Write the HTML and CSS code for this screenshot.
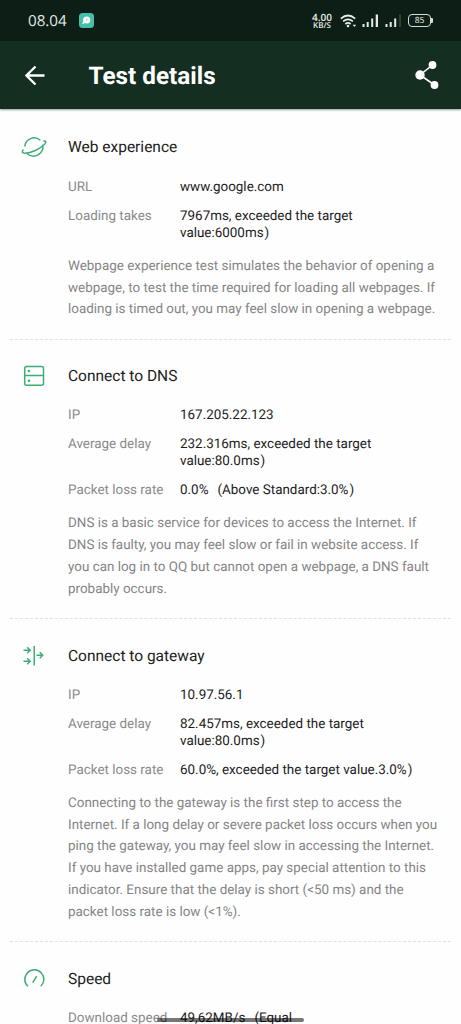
FILE: index.html
```html
<!DOCTYPE html>
<html lang="en">
<head>
<meta charset="utf-8">
<title>Test details</title>
<link rel="stylesheet" href="styles.css">
</head>
<body>
<div class="screen">
  <div class="status">
    <span class="clock">08.04</span>
    <svg class="app" width="15" height="15" viewBox="0 0 15 15"><rect width="15" height="15" rx="3.5" fill="#45bfa9"/><circle cx="7.7" cy="7" r="3.6" fill="#fff"/><path d="M5.2 8.5 3.8 11" stroke="#fff" stroke-width="1.4"/><circle cx="7.8" cy="6.8" r="1" fill="#9bdccf"/></svg>
    <div class="rate"><span>4.00</span><span class="unit">KB/S</span></div>
    <svg class="wifi" width="17" height="14" viewBox="0 0 17 14" fill="none" stroke="#e4ebe6" stroke-width="1.7"><path d="M.8 4.6Q8 -1.6 15.2 4.6M3.1 7.4Q8 3.2 12.9 7.4M5.3 10Q8 7.7 10.7 10"/><circle cx="8" cy="12" r="1.3" fill="#e4ebe6" stroke="none"/><path d="M12.6 10.8h3.6l-1.8 2.2z" fill="#e4ebe6" stroke="none"/></svg>
    <svg class="bars" width="17" height="13" viewBox="0 0 17 13" fill="#e4ebe6"><path d="M.5 10h2v3h-2zM4.7 8h2v5h-2zM9.2 4.500h2V13h-2zM13.700.500h2.300V13h-2.300z"/></svg>
    <svg class="bars2" width="17" height="13" viewBox="0 0 17 13" fill="#e4ebe6"><path d="M.5 10h2v3h-2zM4.700 8h2v5h-2zM9.200 4.500h2V13h-2z"/><path d="M14 .500h2V13h-2z" fill="#2c4034"/></svg>
    <div class="battery">85</div>
  </div>
  <div class="appbar">
    <svg width="20" height="20" viewBox="0 0 20 20" fill="none" stroke="#fff" stroke-width="2.300"><path d="M19.500 10.500H2M10.500 1.500 1.500 10.500l9 9"/></svg>
    <h1>Test details</h1>
    <svg class="share" width="24" height="30" viewBox="0 0 24 30" fill="#fff"><path d="M17.500 5 5 15l14.500 10" fill="none" stroke="#fff" stroke-width="1.600"/><circle cx="17.500" cy="5" r="3.900"/><circle cx="5" cy="15" r="4.700"/><circle cx="19.500" cy="25" r="3.900"/></svg>
  </div>
  <main>
    <section>
      <svg class="icon" width="26" height="24" viewBox="0 0 26 24"><path d="M3.800 11.500A9.300 9.300 0 0 1 19.300 5.300M21.800 9.500C23.500 18 13.500 25 6.200 18.800M22.500 6.300c2.300-.7 3 .3 1.500 2.300C20 13.500 9 18.800 3 18.100c-2.300-.4-2.100-1.600-.5-3.500"/></svg>
      <div class="body">
        <h2>Web experience</h2>
        <dl>
          <dt>URL</dt><dd>www.google.com</dd>
          <dt>Loading takes</dt><dd>7967ms, exceeded the target<br>value:6000ms<span class="paren">)</span></dd>
        </dl>
        <p>Webpage experience test simulates the behavior of opening a<br>webpage, to test the time required for loading all webpages. If<br>loading is timed out, you may feel slow in opening a webpage.</p>
      </div>
    </section>
    <section>
      <svg class="icon" width="26" height="24" viewBox="0 0 26 24"><rect x="3.700" y="2.500" width="18.800" height="18.700" rx="2"/><path d="M3.700 11.500h18.800"/><circle class="dot" cx="8" cy="7" r="1.300"/><circle class="dot" cx="8" cy="16.800" r="1.300"/></svg>
      <div class="body">
        <h2>Connect to DNS</h2>
        <dl>
          <dt>IP</dt><dd>167.205.22.123</dd>
          <dt>Average delay</dt><dd>232.316ms, exceeded the target<br>value:80.0ms<span class="paren">)</span></dd>
          <dt>Packet loss rate</dt><dd>0.0%<span class="open">(</span>Above Standard:3.0%<span class="paren">)</span></dd>
        </dl>
        <p>DNS is a basic service for devices to access the Internet. If<br>DNS is faulty, you may feel slow or fail in website access. If<br>you can log in to QQ but cannot open a webpage, a DNS fault<br>probably occurs.</p>
      </div>
    </section>
    <section>
      <svg class="icon" width="26" height="24" viewBox="0 0 26 24"><path d="M13.200 2v19.500M2.500 6.200H9M6.200 3.200l3 3-3 3M2.500 17.200H9M6.200 14.200l3 3-3 3M15.500 11.200h6.200M18.700 8.200l3 3-3 3"/></svg>
      <div class="body">
        <h2>Connect to gateway</h2>
        <dl>
          <dt>IP</dt><dd>10.97.56.1</dd>
          <dt>Average delay</dt><dd>82.457ms, exceeded the target<br>value:80.0ms<span class="paren">)</span></dd>
          <dt>Packet loss rate</dt><dd>60.0%, exceeded the target value.3.0%<span class="paren">)</span></dd>
        </dl>
        <p>Connecting to the gateway is the first step to access the<br>Internet. If a long delay or severe packet loss occurs when you<br>ping the gateway, you may feel slow in accessing the Internet.<br>If you have installed game apps, pay special attention to this<br>indicator. Ensure that the delay is short (&lt;50 ms) and the<br>packet loss rate is low (&lt;1%).</p>
      </div>
    </section>
    <section>
      <svg class="icon" width="26" height="24" viewBox="0 0 26 24"><path d="M6.900 19.300A9.500 9.500 0 1 1 19.800 19.300M15.700 9.200l-4 6.500"/></svg>
      <div class="body">
        <h2>Speed</h2>
        <dl><dt>Download speed</dt><dd>49,62MB/s<span class="open">(</span>Equal</dd></dl>
      </div>
    </section>
  </main>
  <div class="homebar"></div>
</div>
</body>
</html>
```
FILE: styles.css
```css
* { box-sizing: border-box; }
body { margin: 0; font-family: Roboto, sans-serif; background: #fefefe; text-rendering: geometricPrecision; }
.screen { position: relative; width: 461px; height: 1024px; overflow: hidden; }
.status { display: flex; align-items: center; height: 41px; padding: 0 28px; background: #0c1e15; color: #e4ebe6; }
.clock { width: 51px; font-family: "Open Sans", sans-serif; font-size: 15.200px; }
.rate { display: flex; flex-direction: column; align-items: center; width: 22px; margin-left: 217px; font: 600 10px/9px "Open Sans", sans-serif; }
.unit { font-size: 8px; line-height: 7px; }
.wifi { margin-left: 7px; }
.bars { margin-left: 5px; }
.bars2 { margin-left: 6px; }
.battery { width: 23px; height: 13px; margin-left: 6px; border: 1.500px solid #d5ddd8; border-radius: 4px; font: 8.500px/11px "Open Sans", sans-serif; text-align: center; position: relative; }
.battery::after { content: ""; position: absolute; right: -3px; top: 3px; width: 2px; height: 5px; border-radius: 0 1px 1px 0; background: #d5ddd8; }
.status svg, .status div { flex-shrink: 0; }
.appbar { display: flex; align-items: center; height: 68px; padding: 0 22px 0 25px; background: #142e21; box-shadow: 0 1px 2px #0006; position: relative; }
h1 { margin: 2px 0 0 43.500px; color: #fff; font-size: 24.300px; font-weight: 700; line-height: 28px; }
.share { margin-left: auto; }
main { display: flex; flex-direction: column; padding-top: 1px; }
section { display: flex; margin: 0 10px; padding: 24.300px 0 18px 11px; border-bottom: 1px dashed #e2e2e2; }
section:first-child { padding-top: 25px; padding-bottom: 17.500px; }
section:last-child { border: 0; }
.icon { flex: none; width: 26px; margin-right: 21px; fill: none; stroke: #3fac74; stroke-width: 1.500; }
.dot { fill: #3fac74; stroke: none; }
.body { white-space: nowrap; }
h2 { margin: 0 0 19.500px; color: #1c1c1c; font-size: 15.500px; font-weight: 400; line-height: 24px; }
section:first-child h2 { margin-bottom: 20px; }
dl { display: grid; grid-template-columns: 112px auto; row-gap: 12px; margin: 0 0 14px; font-size: 13.430px; line-height: 17px; }
dt { color: #8a8a8a; }
dd { margin: 0; color: #1c1c1c; }
.paren { margin-left: 1px; }
.open { margin-left: 9px; }
p { margin: 0; color: #858585; font-size: 13.430px; line-height: 21.700px; }
.homebar { position: absolute; left: 157px; top: 1018px; width: 147px; height: 4px; border-radius: 2px; background: #0008; }
```
